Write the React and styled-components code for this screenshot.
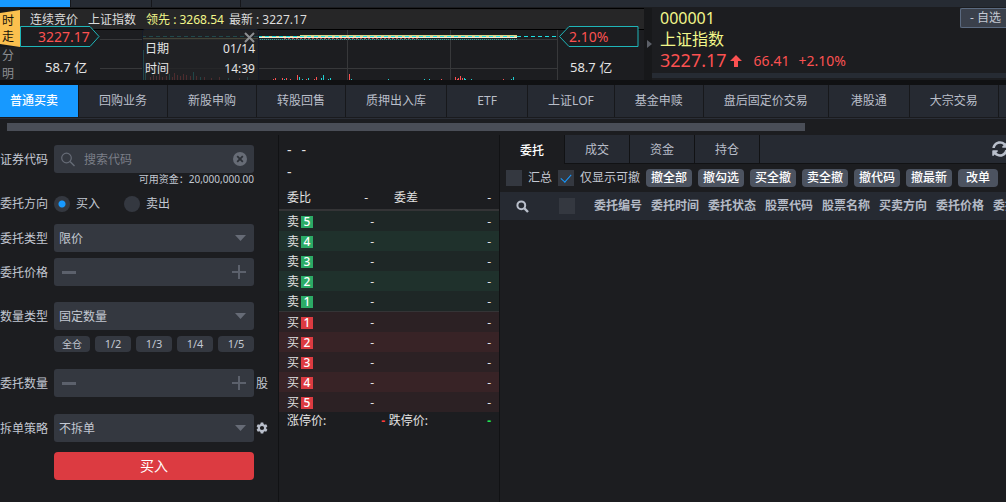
import React, { useState } from "react";
import styled, { createGlobalStyle, css } from "styled-components";

const GlobalStyle = createGlobalStyle`
  * {
    box-sizing: border-box;
  }

  body {
    margin: 0;
    background: #1c1d20;
    color: #c3c8d2;
    font-family: "Noto Sans", "Noto Sans CJK SC", sans-serif;
    font-size: 12px;
    line-height: 16px;
    overflow: hidden;
  }

  button,
  input,
  select {
    font: inherit;
    color: inherit;
  }

  svg {
    display: block;
  }
`;

const Page = styled.div`
  display: flex;
  flex-direction: column;
  min-height: 100vh;
`;

/* Top strip */
const TopStrip = styled.div`
  display: flex;
  height: 7px;
  background: #262b33;
`;

const StripTab = styled.div`
  width: ${(p) => p.$width}px;
  background: ${(p) => (p.$active ? "#1799ff" : "transparent")};
  border-right: 1px solid #15161a;
`;

/* Market area */
const Market = styled.section`
  display: flex;
  height: 78px;
  padding-top: 1px;
  overflow: hidden;
  border-bottom: 5px solid #101113;
`;

const SideTabs = styled.nav`
  width: 20px;
  padding-top: 2px;
  background: #17181a;
`;

const SideTab = styled.button`
  display: block;
  width: 20px;
  height: ${(p) => (p.$active ? 37 : 18)}px;
  padding: 0 6px 0 2px;
  border: 0;
  overflow: hidden;
  font-size: 12px;
  line-height: ${(p) => (p.$active ? 16 : 18)}px;
  word-break: break-all;
  color: ${(p) => (p.$active ? "#16130a" : "#8c8e92")};
  background: ${(p) => (p.$active ? "#fbc04e" : "#202123")};
  ${(p) =>
    p.$active &&
    css`
      clip-path: polygon(0 8%, 100% 0, 100% 100%, 0 92%);
    `}
`;

const ChartPane = styled.div`
  display: flex;
  flex-direction: column;
  width: 624px;
  flex-shrink: 0;
`;

const ChartHeader = styled.div`
  display: flex;
  flex-shrink: 0;
  align-items: center;
  height: 22px;
  padding: 1px 10px 0;
  border-top: 1px solid #000;
  border-bottom: 1px solid #000;
  background: #262627;
  color: #dcdcdc;
  white-space: pre;
`;

const HeaderItem = styled.span`
  margin-right: ${(p) => (p.$lead ? 5 : 10)}px;
  color: ${(p) => (p.$lead ? "#f2f78a" : "inherit")};
`;

const ChartBody = styled.div`
  display: flex;
  flex: 1;
`;

const Axis = styled.div`
  width: ${(p) => p.$width}px;
`;

const PriceTag = styled.div`
  position: relative;
  height: 21px;
  margin-top: -4px;
  padding: ${(p) => (p.$right ? "0 0 0 11px" : "0 0 0 18px")};
  font-size: 14px;
  line-height: 21px;
  color: #fb5151;

  svg {
    position: absolute;
    left: 0;
    top: 0;
  }

  span {
    position: relative;
  }
`;

const Volume = styled.div`
  padding: 12px 0 0 ${(p) => (p.$right ? 12 : 25)}px;
  font-size: 13px;
  color: #e4e4e4;
`;

const Plot = styled.div`
  position: relative;
  flex: 1;
`;

const Tooltip = styled.div`
  position: absolute;
  left: 42px;
  top: -1px;
  width: 117px;
  height: 60px;
  padding: 9px 3px 0 2px;
  border: 1px solid #141a29;
  border-radius: 3px;
  background: rgba(34, 35, 37, 0.8);
  color: #e4e4e4;
`;

const TooltipRow = styled.div`
  display: flex;
  justify-content: space-between;
  height: 20px;
  line-height: 20px;
`;

const CloseButton = styled.button`
  position: absolute;
  right: 3px;
  top: 2px;
  display: flex;
  padding: 0;
  border: 0;
  background: none;
`;

const Splitter = styled.div`
  display: flex;
  align-items: center;
  justify-content: flex-end;
  width: 8px;
  background: #17181a;
`;

const Quote = styled.div`
  flex: 1;
  display: flex;
  justify-content: space-between;
  align-items: flex-start;
  padding: 0 0 0 8px;
  border-bottom: 5px solid #262b33;
  margin-bottom: 2px;
`;

const QuoteName = styled.div`
  font-size: 16px;
  line-height: 21px;
  color: #f2f78a;
`;

const QuotePrice = styled.div`
  display: flex;
  align-items: center;
  color: #fb5151;
  font-size: 14px;
  line-height: 21px;

  strong {
    font-size: 18px;
    font-weight: 400;
  }

  svg {
    margin: 0 12px 0 3px;
  }

  span {
    margin-right: 9px;
  }
`;

const WatchButton = styled.button`
  height: 20px;
  padding: 0 5px 0 9px;
  border: 1px solid #5b6a80;
  border-right: 0;
  border-radius: 2px 0 0 2px;
  background: #3a404b;
  line-height: 16px;
`;

/* Business tabs */
const BizTabs = styled.nav`
  display: flex;
  height: 34px;
  border-bottom: 1px solid #2a2e37;
  background: #262a32;
  box-shadow: inset 0 -1px #1a1b1e;
  overflow: hidden;
`;

const BizTab = styled.button`
  flex-shrink: 0;
  height: 32px;
  min-width: ${(p) => (p.$active ? 79 : 81)}px;
  padding: 0 20px 0 ${(p) => (p.$active ? 10 : 20)}px;
  border: 0;
  border-right: 1px solid #17181b;
  background: ${(p) => (p.$active ? "#1799ff" : "#262a32")};
  color: ${(p) => (p.$active ? "#fff" : "#b9bec9")};
  font-weight: ${(p) => (p.$active ? 500 : 400)};
  white-space: nowrap;
`;

const ScrollTrack = styled.div`
  padding: 4px 20% 4px 7px;
`;

const ScrollThumb = styled.div`
  height: 8px;
  background: #4a4e57;
`;

/* Workspace */
const Workspace = styled.main`
  display: flex;
  flex: 1;
`;

const OrderForm = styled.form`
  display: flex;
  flex-direction: column;
  width: 279px;
  flex-shrink: 0;
  padding-top: 10px;
  border-right: 1px solid #111214;
`;

const FormRow = styled.div`
  display: grid;
  grid-template-columns: 52px 200px auto;
  column-gap: 2px;
  align-items: center;
  margin-bottom: ${(p) => p.$gap || 0}px;

  > label,
  > span {
    padding-top: 1px;
    white-space: nowrap;
  }
`;

const Field = styled.div`
  display: flex;
  align-items: center;
  height: 28px;
  padding: 0 7px;
  border-radius: 3px;
  background: #343840;

  input {
    flex: 1;
    min-width: 0;
    padding: 2px 9px 0;
    border: 0;
    outline: 0;
    background: none;
  }

  input::placeholder {
    color: #7b7f88;
    opacity: 1;
  }

  button {
    display: flex;
    padding: 0;
    border: 0;
    background: none;
  }
`;

const SelectField = styled.div`
  display: grid;
  align-items: center;

  select,
  svg {
    grid-area: 1 / 1;
  }

  select {
    appearance: none;
    width: 100%;
    height: 28px;
    padding: 1px 5px 0;
    border: 0;
    border-radius: 3px;
    background: #343840;
  }

  svg {
    justify-self: end;
    margin-right: 8px;
    pointer-events: none;
  }
`;

const Funds = styled.div`
  width: 254px;
  height: 14px;
  margin-bottom: 8px;
  font-size: 10px;
  line-height: 13px;
  text-align: right;
`;

const RadioGroup = styled.div`
  display: flex;
  gap: 24px;
`;

const RadioLabel = styled.label`
  display: flex;
  align-items: center;
  gap: 6px;

  input {
    appearance: none;
    width: 16px;
    height: 16px;
    margin: 0;
    border-radius: 50%;
    background: #343840;
  }

  input:checked {
    background: radial-gradient(circle, #1799ff 3px, #343840 4px);
  }
`;

const Chips = styled.div`
  display: flex;
  gap: 5px;
  margin: 0 0 17px 54px;
`;

const Chip = styled.button`
  width: 36px;
  height: 16px;
  padding: 0;
  border: 0;
  border-radius: 4px;
  background: #343840;
  font-size: ${(p) => (p.$small ? 10 : 11)}px;
  line-height: 16px;
`;

const IconButton = styled.button`
  display: flex;
  padding: 0;
  border: 0;
  background: none;
  color: #b9bfcb;
`;

const SubmitButton = styled.button`
  width: 200px;
  height: 28px;
  margin-left: 54px;
  border: 0;
  border-radius: 4px;
  background: #dc3b41;
  color: #fff;
  font-size: 14px;
`;

/* Order book */
const Book = styled.section`
  width: 221px;
  flex-shrink: 0;
  padding-top: 4px;
  border-right: 1px solid #111214;
  color: #e2e2e2;
`;

const BookTitle = styled.div`
  display: flex;
  gap: 10px;
  height: 22px;
  padding: 0 8px;
  font-size: 14px;
  line-height: 22px;
`;

const BookSummary = styled.div`
  display: grid;
  grid-template-columns: ${(p) => p.$columns};
  padding: ${(p) => p.$top || 0}px 8px 0;
  line-height: ${(p) => p.$line}px;

  > :not(:first-child) {
    text-align: right;
  }
`;

const LimitValue = styled.span`
  color: ${(p) => (p.$up ? "#ff3b3b" : "#1fe650")};
  font-weight: 700;
`;

const Levels = styled.div`
  border-top: ${(p) => (p.$side === "sell" ? 2 : 1)}px solid #343436;
`;

const Level = styled.div`
  display: grid;
  grid-template-columns: 26px 61px 1fr;
  align-items: center;
  height: 20px;
  padding: 1px 8px 0;
  background: ${(p) => (p.$side === "sell" ? "#1e2726" : "#2c2124")};

  &:nth-child(even) {
    background: ${(p) => (p.$side === "sell" ? "#1f312c" : "#382326")};
  }

  > span {
    text-align: right;
  }
`;

const LevelName = styled.div`
  display: flex;
  align-items: center;
  gap: 2px;

  b {
    width: 12px;
    height: 12px;
    background: ${(p) => (p.$side === "sell" ? "#2cab66" : "#dc3b41")};
    color: #fff;
    font-weight: 500;
    line-height: 12px;
    text-align: center;
  }
`;

/* Orders panel */
const Orders = styled.section`
  flex: 1;
  min-width: 0;
  overflow: hidden;
`;

const OrderTabs = styled.div`
  display: flex;
  height: 29px;
  border-bottom: 1px solid #111214;
  background: #262a32;
`;

const OrderTab = styled.button`
  width: 65px;
  height: ${(p) => (p.$active ? 29 : 28)}px;
  padding: 2px 0 0;
  border: 0;
  border-right: 1px solid #111214;
  background: ${(p) => (p.$active ? "#1c1d20" : "transparent")};
  color: ${(p) => (p.$active ? "#fff" : "#b9bec9")};
  font-weight: ${(p) => (p.$active ? 500 : 400)};
`;

const RefreshButton = styled(IconButton)`
  align-items: center;
  margin: 0 -2px 0 auto;
`;

const Toolbar = styled.div`
  display: flex;
  align-items: center;
  gap: 6px;
  height: 28px;
  padding-left: 6px;
  white-space: nowrap;
`;

const CheckLabel = styled.label`
  display: flex;
  align-items: center;
  gap: 6px;
`;

const Checkbox = styled.input`
  appearance: none;
  display: grid;
  place-items: center;
  flex-shrink: 0;
  width: 16px;
  height: 16px;
  margin: 0;
  background: #343840;

  &:checked::before {
    content: "";
    width: 5px;
    height: 9px;
    margin-bottom: 2px;
    border: solid #1799ff;
    border-width: 0 1px 1px 0;
    transform: rotate(42deg);
  }
`;

const ToolButton = styled.button`
  min-width: 40px;
  height: 18px;
  padding: 0 5px;
  border: 0;
  border-radius: 4px;
  background: #4c5360;
  color: #fff;
  font-weight: 500;
  line-height: 18px;
`;

const OrderTable = styled.table`
  table-layout: fixed;
  width: 550px;
  border-collapse: collapse;
  background: #262a32;
  color: #b4bac6;

  th {
    height: 28px;
    padding: 0;
    font-weight: 700;
    text-align: left;
    white-space: nowrap;
  }

  th:first-child {
    width: 59px;
    padding-left: 16px;
  }

  th:nth-child(2) {
    width: 35px;
  }
`;

const BIZ_TABS = [
  "普通买卖",
  "回购业务",
  "新股申购",
  "转股回售",
  "质押出入库",
  "ETF",
  "上证LOF",
  "基金申赎",
  "盘后固定价交易",
  "港股通",
  "大宗交易",
  "",
];
const ORDER_TABS = ["委托", "成交", "资金", "持仓"];
const TOOLS = ["撤全部", "撤勾选", "买全撤", "卖全撤", "撤代码", "撤最新", "改单"];
const COLUMNS = [
  "委托编号",
  "委托时间",
  "委托状态",
  "股票代码",
  "股票名称",
  "买卖方向",
  "委托价格",
  "委托数量",
];
const CHIPS = ["全仓", "1/2", "1/3", "1/4", "1/5"];

// [x, height, color] of the volume bars
const BARS = [
  [43, 30, "c"], [45, 8, "c"], [50, 3, "r"], [53, 5, "r"], [56, 4, "r"],
  [59, 6, "r"], [62, 3, "r"], [66, 4, "r"], [69, 6, "c"], [72, 3, "r"],
  [74, 7, "r"], [77, 5, "r"], [80, 4, "r"], [83, 6, "r"], [86, 5, "r"],
  [90, 4, "r"], [93, 8, "c"], [96, 4, "r"], [100, 3, "c"], [104, 3, "r"],
  [111, 2, "r"], [119, 3, "r"], [128, 2, "c"], [139, 2, "r"], [147, 3, "c"],
  [173, 1, "r"], [175, 2, "r"], [182, 2, "r"], [184, 1, "c"], [186, 2, "r"],
  [190, 1, "r"], [197, 5, "r"], [199, 3, "c"], [202, 1, "c"], [206, 1, "r"],
  [208, 2, "c"], [214, 1, "r"], [216, 3, "r"], [221, 2, "c"], [223, 5, "c"],
  [228, 1, "c"], [230, 2, "c"], [249, 6, "r"], [251, 1, "c"], [288, 1, "c"],
  [324, 1, "c"], [329, 1, "c"], [341, 1, "r"], [355, 3, "r"], [357, 1, "r"],
  [358, 2, "r"], [360, 4, "r"], [362, 2, "r"], [364, 2, "c"], [365, 1, "c"],
  [371, 1, "c"], [403, 1, "r"], [411, 1, "c"], [413, 3, "c"],
];

const Chart = () => (
  <svg width="458" height="50" viewBox="0 0 458 50" shapeRendering="crispEdges">
    <path
      d="M0 9.500H458M0 38.500H458M158.500 0V50M247.500 0V50M350.500 0V50M457.500 0V50"
      stroke="#37383a"
      fill="none"
    />
    <path d="M42 6.500H158" stroke="#1fe0e2" strokeDasharray="4 3" />
    <path d="M42 8.500H158" stroke="#c9c878" />
    <path d="M158 5.500H200L300 4.500H400L417 5.500V7.500H158Z" fill="#d6d48c" />
    <path d="M158 7.500H417" stroke="#f4f0d8" />
    <path d="M158 6.500H458" stroke="#1fe0e2" strokeDasharray="4 3" />
    <path d="M158 9.500H417" stroke="#2b9fa0" strokeDasharray="1 1" />
    <path d="M184 8.500H320" stroke="#b84444" strokeDasharray="2 2" />
    {BARS.map(([x, h, c]) => (
      <rect
        key={x}
        x={x}
        y={50 - h}
        width="1"
        height={h}
        fill={c === "r" ? "#fb5151" : "#1fd0d2"}
      />
    ))}
  </svg>
);

const CaretIcon = () => (
  <svg width="11" height="6" viewBox="0 0 11 6">
    <path d="M0 0H11L5.500 6Z" fill="#666b76" />
  </svg>
);

const GlassIcon = () => (
  <svg width="14" height="15" viewBox="0 0 14 15" fill="none" stroke="#666b76">
    <circle cx="5.500" cy="6" r="4.800" strokeWidth="1.200" />
    <path d="M9 9.500L13.500 14" strokeWidth="1.400" />
  </svg>
);

const ClearIcon = () => (
  <svg width="14" height="14" viewBox="0 0 14 14">
    <circle cx="7" cy="7" r="7" fill="#676c76" />
    <path d="M4.200 4.200L9.800 9.800M9.800 4.200L4.200 9.800" stroke="#2c3037" strokeWidth="1.800" />
  </svg>
);

const MinusIcon = () => (
  <svg width="15" height="15" viewBox="0 0 15 15">
    <path d="M1 6H15V9H1Z" fill="#5c616c" />
  </svg>
);

const PlusIcon = () => (
  <svg width="15" height="15" viewBox="0 0 15 15">
    <path d="M6 0H8V6H14V8H8V14H6V8H0V6H6Z" fill="#5c616c" />
  </svg>
);

const GearIcon = () => (
  <svg width="12" height="12" viewBox="0 0 24 24" fill="currentColor">
    <path
      fillRule="evenodd"
      d="M9.500 1h5l.7 3.200 2 1.100 3.100-1 2.500 4.400-2.400 2.100v2.400l2.400 2.100-2.500 4.400-3.100-1-2 1.100-.7 3.200h-5l-.7-3.200-2-1.100-3.100 1-2.500-4.400 2.400-2.100v-2.400L1.200 8.700l2.500-4.400 3.100 1 2-1.100zM12 7.800a4.200 4.200 0 1 0 0 8.400 4.200 4.200 0 0 0 0-8.400z"
    />
  </svg>
);

const SearchIcon = () => (
  <svg width="13" height="13" viewBox="0 0 13 13" fill="none" stroke="currentColor">
    <circle cx="5.300" cy="5.300" r="3.900" strokeWidth="2" />
    <path d="M8.200 8.200L12 12" strokeWidth="2.400" />
  </svg>
);

const RefreshIcon = () => (
  <svg width="16" height="16" viewBox="0 0 512 512" fill="currentColor">
    <path d="M370.700 133.300C339.500 104 298.900 88 255.800 88c-77.500.1-144.300 53.200-162.800 126.900-1.300 5.400-6.100 9.200-11.700 9.200H24.100c-7.500 0-13.200-6.800-11.800-14.200C33.900 94.900 134.800 8 256 8c66.400 0 126.800 26.100 171.300 68.700L463 41c15.100-15.100 41-4.400 41 17v134c0 13.300-10.700 24-24 24H346c-21.400 0-32.100-25.900-17-41zM32 296h134c21.400 0 32.100 25.900 17 41l-41.800 41.800c31.300 29.300 71.800 45.300 114.900 45.300 77.400-.1 144.300-53.100 162.800-126.800 1.300-5.400 6.100-9.200 11.700-9.200h57.300c7.500 0 13.200 6.800 11.800 14.200C478.100 417.100 377.200 504 256 504c-66.400 0-126.800-26.100-171.300-68.700L49 471c-15.100 15.100-41 4.400-41-17V320c0-13.300 10.700-24 24-24z" />
  </svg>
);

const Stepper = ({ id }) => (
  <Field>
    <button type="button" aria-label="减少">
      <MinusIcon />
    </button>
    <input id={id} type="text" />
    <button type="button" aria-label="增加">
      <PlusIcon />
    </button>
  </Field>
);

const Select = ({ id, value }) => (
  <SelectField>
    <select id={id} defaultValue={value}>
      <option>{value}</option>
    </select>
    <CaretIcon />
  </SelectField>
);

const MarketArea = () => (
  <Market>
    <SideTabs>
      <SideTab $active>时走</SideTab>
      <SideTab>分</SideTab>
      <SideTab>明</SideTab>
    </SideTabs>
    <ChartPane>
      <ChartHeader>
        <HeaderItem>连续竞价</HeaderItem>
        <HeaderItem>上证指数</HeaderItem>
        <HeaderItem $lead>领先 : 3268.54</HeaderItem>
        <HeaderItem>最新 : 3227.17</HeaderItem>
      </ChartHeader>
      <ChartBody>
        <Axis $width={80}>
          <PriceTag>
            <svg width="80" height="21" viewBox="0 0 80 21">
              <path d="M.5 .5H70L79 10.500L70 20.500H.5Z" fill="#1c1d20" stroke="#1fb5b8" />
            </svg>
            <span>3227.17</span>
          </PriceTag>
          <Volume>58.7 亿</Volume>
        </Axis>
        <Plot>
          <Chart />
          <Tooltip>
            <CloseButton aria-label="关闭">
              <svg width="11" height="11" viewBox="0 0 11 11">
                <path d="M1 1L10 10M10 1L1 10" stroke="#8d8f92" strokeWidth="2" />
              </svg>
            </CloseButton>
            <TooltipRow>
              <span>日期</span>
              <span>01/14</span>
            </TooltipRow>
            <TooltipRow>
              <span>时间</span>
              <span>14:39</span>
            </TooltipRow>
          </Tooltip>
        </Plot>
        <Axis $width={86}>
          <PriceTag $right>
            <svg width="81" height="21" viewBox="0 0 81 21">
              <path d="M80 .5H11L1.500 10.500L11 20.500H80Z" fill="#1c1d20" stroke="#1fb5b8" />
            </svg>
            <span>2.10%</span>
          </PriceTag>
          <Volume $right>58.7 亿</Volume>
        </Axis>
      </ChartBody>
    </ChartPane>
    <Splitter>
      <svg width="5" height="8" viewBox="0 0 5 8">
        <path d="M0 0L5 4L0 8Z" fill="#5c6068" />
      </svg>
    </Splitter>
    <Quote>
      <div>
        <QuoteName>000001</QuoteName>
        <QuoteName>上证指数</QuoteName>
        <QuotePrice>
          <strong>3227.17</strong>
          <svg width="12" height="12" viewBox="0 0 12 12">
            <path d="M6 0L12 6H8V12H4V6H0Z" fill="#fb5151" />
          </svg>
          <span>66.41</span>
          <span>+2.10%</span>
        </QuotePrice>
      </div>
      <WatchButton>- 自选</WatchButton>
    </Quote>
  </Market>
);

const TradeForm = () => {
  const [side, setSide] = useState("buy");
  return (
    <OrderForm onSubmit={(e) => e.preventDefault()}>
      <FormRow>
        <label htmlFor="code">证券代码</label>
        <Field>
          <GlassIcon />
          <input id="code" type="text" placeholder="搜索代码" />
          <button type="button" aria-label="清除">
            <ClearIcon />
          </button>
        </Field>
      </FormRow>
      <Funds>可用资金：20,000,000.00</Funds>
      <FormRow $gap={12}>
        <span>委托方向</span>
        <RadioGroup>
          <RadioLabel>
            <input type="radio" name="side" checked={side === "buy"} onChange={() => setSide("buy")} />
            买入
          </RadioLabel>
          <RadioLabel>
            <input type="radio" name="side" checked={side === "sell"} onChange={() => setSide("sell")} />
            卖出
          </RadioLabel>
        </RadioGroup>
      </FormRow>
      <FormRow $gap={6}>
        <label htmlFor="type">委托类型</label>
        <Select id="type" value="限价" />
      </FormRow>
      <FormRow $gap={16}>
        <label htmlFor="price">委托价格</label>
        <Stepper id="price" />
      </FormRow>
      <FormRow $gap={6}>
        <label htmlFor="amountType">数量类型</label>
        <Select id="amountType" value="固定数量" />
      </FormRow>
      <Chips>
        {CHIPS.map((c, i) => (
          <Chip key={c} type="button" $small={i === 0}>
            {c}
          </Chip>
        ))}
      </Chips>
      <FormRow $gap={17}>
        <label htmlFor="amount">委托数量</label>
        <Stepper id="amount" />
        <span>股</span>
      </FormRow>
      <FormRow $gap={10}>
        <label htmlFor="split">拆单策略</label>
        <Select id="split" value="不拆单" />
        <IconButton type="button" aria-label="设置">
          <GearIcon />
        </IconButton>
      </FormRow>
      <SubmitButton type="submit">买入</SubmitButton>
    </OrderForm>
  );
};

const BookSide = ({ side, name, levels }) => (
  <Levels $side={side}>
    {levels.map((n) => (
      <Level key={n} $side={side}>
        <LevelName $side={side}>
          {name}
          <b>{n}</b>
        </LevelName>
        <span>-</span>
        <span>-</span>
      </Level>
    ))}
  </Levels>
);

const OrderBook = () => (
  <Book>
    <BookTitle>
      <span>-</span>
      <span>-</span>
    </BookTitle>
    <BookTitle>
      <span>-</span>
    </BookTitle>
    <BookSummary $columns="24px 57px 50px 1fr" $top={4} $line={22}>
      <span>委比</span>
      <span>-</span>
      <span>委差</span>
      <span>-</span>
    </BookSummary>
    <BookSide side="sell" name="卖" levels={[5, 4, 3, 2, 1]} />
    <BookSide side="buy" name="买" levels={[1, 2, 3, 4, 5]} />
    <BookSummary $columns="48px 50px 43px 1fr" $line={18}>
      <span>涨停价:</span>
      <LimitValue $up>-</LimitValue>
      <span>跌停价:</span>
      <LimitValue>-</LimitValue>
    </BookSummary>
  </Book>
);

const OrdersPanel = () => {
  const [tab, setTab] = useState(0);
  return (
    <Orders>
      <OrderTabs>
        {ORDER_TABS.map((t, i) => (
          <OrderTab key={t} $active={i === tab} onClick={() => setTab(i)}>
            {t}
          </OrderTab>
        ))}
        <RefreshButton aria-label="刷新">
          <RefreshIcon />
        </RefreshButton>
      </OrderTabs>
      <Toolbar>
        <CheckLabel>
          <Checkbox type="checkbox" />
          汇总
        </CheckLabel>
        <CheckLabel>
          <Checkbox type="checkbox" defaultChecked />
          仅显示可撤
        </CheckLabel>
        {TOOLS.map((t) => (
          <ToolButton key={t}>{t}</ToolButton>
        ))}
      </Toolbar>
      <OrderTable>
        <thead>
          <tr>
            <th>
              <IconButton aria-label="搜索">
                <SearchIcon />
              </IconButton>
            </th>
            <th>
              <Checkbox type="checkbox" aria-label="全选" />
            </th>
            {COLUMNS.map((c) => (
              <th key={c}>{c}</th>
            ))}
          </tr>
        </thead>
      </OrderTable>
    </Orders>
  );
};

const App = () => {
  const [biz, setBiz] = useState(0);
  return (
    <Page>
      <GlobalStyle />
      <TopStrip>
        <StripTab $width={71} $active />
        <StripTab $width={81} />
        <StripTab $width={89} />
      </TopStrip>
      <MarketArea />
      <BizTabs>
        {BIZ_TABS.map((t, i) => (
          <BizTab key={t} $active={i === biz} onClick={() => setBiz(i)}>
            {t}
          </BizTab>
        ))}
      </BizTabs>
      <ScrollTrack>
        <ScrollThumb />
      </ScrollTrack>
      <Workspace>
        <TradeForm />
        <OrderBook />
        <OrdersPanel />
      </Workspace>
    </Page>
  );
};

export default App;
